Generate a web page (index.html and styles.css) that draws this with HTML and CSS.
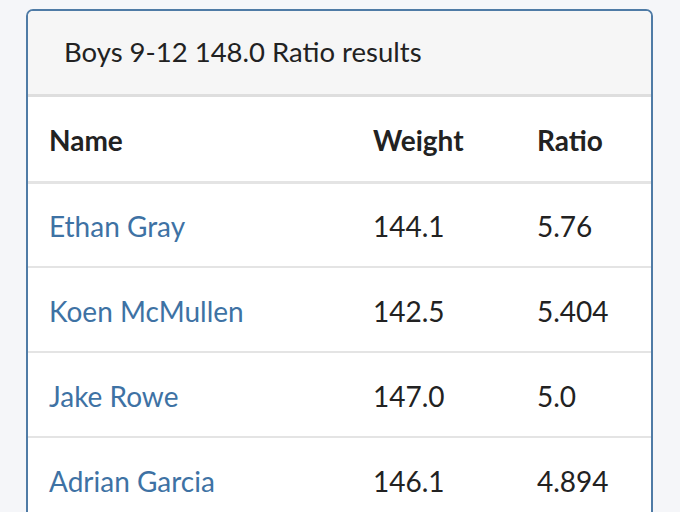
FILE: index.html
```html
<!DOCTYPE html>
<html lang="en">
<head>
<meta charset="utf-8">
<title>Boys 9-12 148.0 Ratio results</title>
<link rel="stylesheet" href="styles.css">
</head>
<body>
<div class="panel">
  <div class="panel-heading">Boys 9-12 148.0 Ratio results</div>
  <table class="results">
    <thead>
      <tr><th class="c-name">Name</th><th class="c-weight">Weight</th><th class="c-ratio">Ratio</th></tr>
    </thead>
    <tbody>
      <tr><td><a href="#">Ethan Gray</a></td><td>144.1</td><td>5.76</td></tr>
      <tr><td><a href="#">Koen McMullen</a></td><td>142.5</td><td>5.404</td></tr>
      <tr><td><a href="#">Jake Rowe</a></td><td>147.0</td><td>5.0</td></tr>
      <tr><td><a href="#">Adrian Garcia</a></td><td>146.1</td><td>4.894</td></tr>
    </tbody>
  </table>
</div>
</body>
</html>
```
FILE: styles.css
```css
html, body {
  margin: 0;
  padding: 0;
  background: #f5f6f9;
  font-family: Lato, "Liberation Sans", sans-serif;
  color: #222;
}
body {
  padding: 9px 0 0 26px;
  height: 512px;
  box-sizing: border-box;
  overflow: hidden;
}
.panel {
  width: 627px;
  box-sizing: border-box;
  border: 2px solid #4f7ba6;
  border-radius: 7px 7px 0 0;
  background: #fff;
  overflow: hidden;
}
.panel-heading {
  background: #f6f6f6;
  height: 86px;
  box-sizing: border-box;
  border-bottom: 3px solid #dedede;
  padding: 0 0 2px 36px;
  display: flex;
  align-items: center;
  font-size: 27.5px;
  color: #222;
}
.results {
  width: 100%;
  border-collapse: collapse;
  table-layout: fixed;
  font-size: 28px;
}
.results th, .results td {
  box-sizing: border-box;
  text-align: left;
  padding: 0 0 0 21px;
  vertical-align: middle;
}
.results th {
  font-weight: 700;
  height: 85px;
  border-bottom: 3px solid #e4e4e4;
  padding-top: 2px;
}
.results td {
  height: 85px;
  border-bottom: 2px solid #e4e4e4;
  font-weight: 400;
  padding-top: 2px;
}
.c-name { width: 324px; }
.c-weight { width: 164px; }
.results a {
  color: #3e72a4;
  text-decoration: none;
}
```
